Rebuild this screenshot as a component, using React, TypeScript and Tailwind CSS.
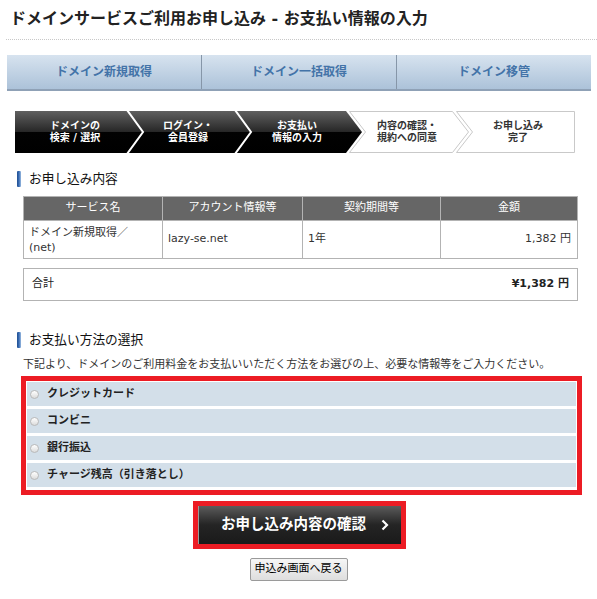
import React from "react";

const font = { fontFamily: "'DejaVu Sans', 'Noto Sans CJK JP', sans-serif" };

function Heading({ children }: { children: React.ReactNode }) {
  return (
    <div className="ml-[17px] flex items-center h-[16px]">
      <div className="w-[4px] h-[16px] rounded-[1px] bg-gradient-to-r from-[#1f4f92] via-[#3a6db4] to-[#9bbbe0]" />
      <div className="ml-[8px] text-[12.7px] leading-[16px] text-[#111]">{children}</div>
    </div>
  );
}

function Steps() {
  const labels: { t: string[]; w: string; dark: boolean }[] = [
    { t: ["ドメインの", "検索 / 選択"], w: "w-[120px]", dark: true },
    { t: ["ログイン・", "会員登録"], w: "w-[106px]", dark: true },
    { t: ["お支払い", "情報の入力"], w: "w-[112px]", dark: true },
    { t: ["内容の確認・", "規約への同意"], w: "w-[108px]", dark: false },
    { t: ["お申し込み", "完了"], w: "w-[114px]", dark: false },
  ];
  return (
    <div className="relative ml-[15px] mt-[20px] w-[560px] h-[42px]">
      <svg width="560" height="42" className="absolute left-0 top-0">
        <defs>
          <linearGradient id="dk" x1="0" y1="0" x2="0" y2="1">
            <stop offset="0" stopColor="#606060" />
            <stop offset="0.5" stopColor="#262626" />
            <stop offset="0.5" stopColor="#020202" />
            <stop offset="1" stopColor="#000000" />
          </linearGradient>
        </defs>
        <rect width="560" height="42" fill="#ffffff" />
        <polygon points="0,0 331,0 347,21 331,42 0,42" fill="url(#dk)" />
        <polyline points="112,-1 128,21 112,43" stroke="#ffffff" strokeWidth="2" fill="none" />
        <polyline points="220,-1 236,21 220,43" stroke="#ffffff" strokeWidth="2" fill="none" />
        <polygon
          points="334.5,0.5 437.5,0.5 453.5,21 437.5,41.5 334.5,41.5 350.5,21"
          fill="#ffffff"
          stroke="#c9c9c9"
        />
        <polygon
          points="441.5,0.5 559.5,0.5 559.5,41.5 441.5,41.5 457.5,21"
          fill="#ffffff"
          stroke="#c9c9c9"
        />
      </svg>
      <div className="relative flex h-[42px]">
        {labels.map((l, i) => (
          <div
            key={i}
            className={`${l.w} flex flex-col items-center justify-center text-[10px] leading-[12px] font-bold ${
              l.dark ? "text-white" : "text-[#333]"
            }`}
          >
            <span>{l.t[0]}</span>
            <span>{l.t[1]}</span>
          </div>
        ))}
      </div>
    </div>
  );
}

function RadioRow({ label }: { label: string }) {
  return (
    <div className="h-[24px] bg-[#d3dfe9] flex items-center pl-[3px]">
      <div className="w-[9px] h-[9px] rounded-full border border-[#b9b9b9] bg-gradient-to-b from-[#ffffff] to-[#dcdcdc]" />
      <span className="ml-[8px] text-[11px] font-bold text-[#222] leading-[14px]">{label}</span>
    </div>
  );
}

export default function App() {
  return (
    <div className="w-[597px] min-h-[599px] bg-white text-[#333]" style={font}>
      <div className="ml-[6px] h-[40px] border-b border-dotted border-[#c8c8c8]">
        <h1 className="pl-[4px] pt-[9px] text-[16px] leading-[20px] font-bold text-[#222]">
          ドメインサービスご利用お申し込み - お支払い情報の入力
        </h1>
      </div>

      <div className="ml-[7px] mt-[15px] w-[584px] h-[36px] flex border-b-2 border-[#8fa1b6]">
        {["ドメイン新規取得", "ドメイン一括取得", "ドメイン移管"].map((t, i) => (
          <div
            key={t}
            className={`flex-1 flex items-center justify-center bg-gradient-to-b from-[#d7e3ef] to-[#acc2d9] text-[12px] font-bold text-[#4373a8] ${
              i > 0 ? "border-l border-[#8696a8]" : ""
            }`}
          >
            {t}
          </div>
        ))}
      </div>

      <Steps />

      <div className="mt-[18px]">
        <Heading>お申し込み内容</Heading>
      </div>

      <div className="ml-[23px] mt-[9px] w-[555px] border border-[#b3b3b3] text-[11px]">
        <div className="grid grid-cols-[138px_140px_138px_1fr] h-[23px] bg-[#666666] text-white">
          <div className="flex items-center justify-center">サービス名</div>
          <div className="flex items-center justify-center border-l border-[#b3b3b3]">アカウント情報等</div>
          <div className="flex items-center justify-center border-l border-[#b3b3b3]">契約期間等</div>
          <div className="flex items-center justify-center border-l border-[#b3b3b3]">金額</div>
        </div>
        <div className="grid grid-cols-[138px_140px_138px_1fr] h-[38px] border-t border-[#b3b3b3] text-[#333]">
          <div className="flex items-center px-[5px] leading-[15px]">
            ドメイン新規取得／
            <br />
            (net)
          </div>
          <div className="flex items-center px-[5px] border-l border-[#b3b3b3]">lazy-se.net</div>
          <div className="flex items-center px-[5px] border-l border-[#b3b3b3]">1年</div>
          <div className="flex items-center justify-end px-[6px] border-l border-[#b3b3b3]">1,382 円</div>
        </div>
      </div>

      <div className="ml-[23px] mt-[9px] w-[555px] h-[33px] border border-[#b3b3b3] flex items-center justify-between px-[8px] text-[11px] text-[#222]">
        <span>合計</span>
        <span className="font-bold">¥1,382 円</span>
      </div>

      <div className="mt-[31px]">
        <Heading>お支払い方法の選択</Heading>
      </div>

      <p className="ml-[23px] mt-[9px] text-[11px] leading-[16px] text-[#333]">
        下記より、ドメインのご利用料金をお支払いいただく方法をお選びの上、必要な情報等をご入力ください。
      </p>

      <div className="ml-[21px] mt-[3px] w-[561px] border-[5px] border-[#ec1c24] bg-white p-[1px] pb-[3px] flex flex-col gap-[3px]">
        <RadioRow label="クレジットカード" />
        <RadioRow label="コンビニ" />
        <RadioRow label="銀行振込" />
        <RadioRow label="チャージ残高（引き落とし）" />
      </div>

      <div className="mt-[6px] flex justify-center pl-[2px]">
        <div className="w-[213px] h-[48px] border-[5px] border-[#ec1c24]">
          <div className="h-full w-full border-l border-[#9a9a9a] bg-gradient-to-b from-[#5c5c5c] via-[#242424] to-[#1a1a1a] flex items-center text-white font-bold text-[14.5px]">
            <span className="ml-[22px]">お申し込み内容の確認</span>
            <svg width="8" height="12" viewBox="0 0 8 12" className="ml-[15px]">
              <polyline points="1.5,1.5 6,6 1.5,10.5" fill="none" stroke="#ffffff" strokeWidth="2.2" />
            </svg>
          </div>
        </div>
      </div>

      <div className="mt-[9px] flex justify-center">
        <button className="w-[98px] h-[23px] border border-[#9a9a9a] rounded-[2px] bg-gradient-to-b from-[#f6f6f6] to-[#dedede] text-[11px] text-black">
          申込み画面へ戻る
        </button>
      </div>
    </div>
  );
}
